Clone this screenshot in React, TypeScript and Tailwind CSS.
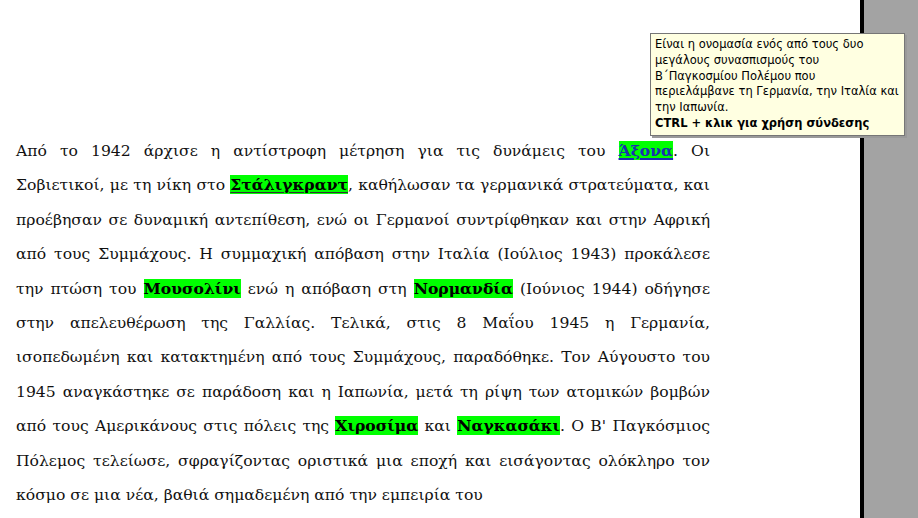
import React from "react"

type Seg = string | { t: string; link?: boolean; dot?: boolean }

const lines: Seg[][] = [
  ["Από το 1942 άρχισε η αντίστροφη μέτρηση για τις δυνάμεις του ", { t: "Άξονα", link: true }, ". Οι"],
  ["Σοβιετικοί, με τη νίκη στο ", { t: "Στάλιγκραντ", dot: true }, ", καθήλωσαν τα γερμανικά στρατεύματα, και"],
  ["προέβησαν σε δυναμική αντεπίθεση, ενώ οι Γερμανοί συντρίφθηκαν και στην Αφρική"],
  ["από τους Συμμάχους. Η συμμαχική απόβαση στην Ιταλία (Ιούλιος 1943) προκάλεσε"],
  ["την πτώση του ", { t: "Μουσολίνι" }, " ενώ η απόβαση στη ", { t: "Νορμανδία" }, " (Ιούνιος 1944) οδήγησε"],
  ["στην απελευθέρωση της Γαλλίας. Τελικά, στις 8 Μαΐου 1945 η Γερμανία,"],
  ["ισοπεδωμένη και κατακτημένη από τους Συμμάχους, παραδόθηκε. Τον Αύγουστο του"],
  ["1945 αναγκάστηκε σε παράδοση και η Ιαπωνία, μετά τη ρίψη των ατομικών βομβών"],
  ["από τους Αμερικάνους στις πόλεις της ", { t: "Χιροσίμα" }, " και ", { t: "Ναγκασάκι" }, ". Ο Β' Παγκόσμιος"],
  ["Πόλεμος τελείωσε, σφραγίζοντας οριστικά μια εποχή και εισάγοντας ολόκληρο τον"],
]

function Line({ segs, last }: { segs: Seg[]; last?: boolean }) {
  return (
    <div className={last ? "text-left" : "text-justify [text-align-last:justify]"}>
      {segs.map((s, i) =>
        typeof s === "string" ? (
          <span key={i}>{s}</span>
        ) : (
          <span
            key={i}
            className={
              "bg-[#00ff00] font-bold " +
              (s.link
                ? "text-[#1a2fb0] underline decoration-[#1a2fb0] decoration-2 underline-offset-2"
                : s.dot
                ? "text-black underline decoration-[#333] underline-offset-2"
                : "text-black")
            }
          >
            {s.t}
          </span>
        )
      )}
    </div>
  )
}

export default function App() {
  return (
    <div className="relative flex h-[518px] w-[918px] overflow-hidden bg-white">
      {/* page */}
      <div className="w-[860px] shrink-0 bg-white pl-4 pt-[134px]">
        <div
          className="w-[694px] text-[15.6px] leading-[34.4px] text-[#111]"
          style={{ fontFamily: '"DejaVu Serif", "Liberation Serif", serif' }}
        >
          {lines.map((l, i) => (
            <Line key={i} segs={l} />
          ))}
          <Line segs={["κόσμο σε μια νέα, βαθιά σημαδεμένη από την εμπειρία του"]} last />
        </div>
      </div>
      <div className="w-[4px] shrink-0 bg-black" />
      <div className="flex-1 bg-[#a3a3a3]" />

      {/* hyperlink tooltip */}
      <div
        className="absolute left-[650px] top-[33px] w-[255px] border border-[#767676] bg-[#ffffe1] px-[4px] pt-[3px] pb-[3px] text-[11.5px] leading-[15.8px] text-black shadow-[2px_2px_0_#9a9a9a]"
        style={{ fontFamily: '"DejaVu Sans", "Liberation Sans", sans-serif' }}
      >
        <div>Είναι η ονομασία ενός από τους δυο</div>
        <div>μεγάλους συνασπισμούς του</div>
        <div>Β΄Παγκοσμίου Πολέμου που</div>
        <div className="whitespace-nowrap">περιελάμβανε τη Γερμανία, την Ιταλία και</div>
        <div>την Ιαπωνία.</div>
        <div className="whitespace-nowrap font-bold">CTRL + κλικ για χρήση σύνδεσης</div>
      </div>
    </div>
  )
}
